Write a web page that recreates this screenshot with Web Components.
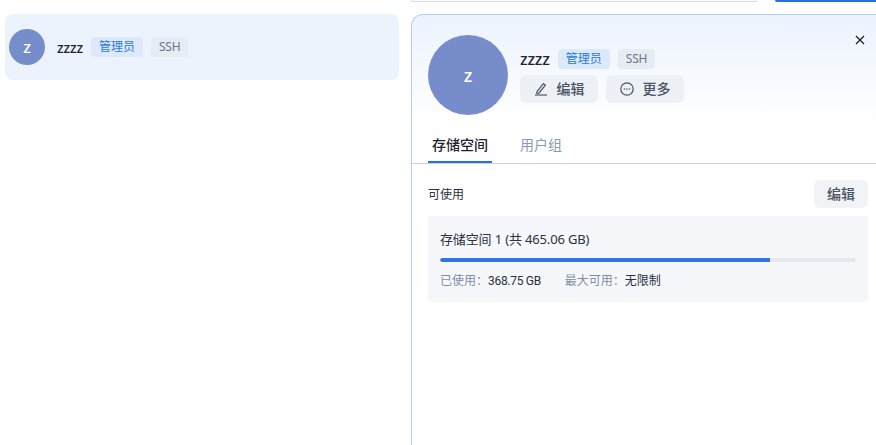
<!DOCTYPE html>
<html lang="zh">
<head>
<meta charset="utf-8">
<title>用户</title>
<style>
html, body { margin: 0; height: 100%; overflow: hidden; background: #fff; }
body { font-family: "Noto Sans", "Noto Sans CJK SC", sans-serif; color: #1f2430; }
</style>
</head>
<body>
<app-shell>
  <user-row slot="list" name="zzzz"></user-row>
  <user-detail slot="detail" name="zzzz"></user-detail>
</app-shell>

<script>
const TAGS = `<user-tag kind="primary">管理员</user-tag><user-tag>SSH</user-tag>`;

class AppShell extends HTMLElement {
  constructor() {
    super();
    this.attachShadow({ mode: "open" }).innerHTML = `<style>
:host { display: flex; height: 445px; box-sizing: border-box; }
.list { width: 394px; flex: none; padding: 14px 12px 0 5px; }
.main { flex: 1; min-width: 0; display: flex; flex-direction: column; }
.top { height: 2px; flex: none; display: flex; gap: 18px; margin-bottom: 12px; }
.search { width: 346px; height: 2px; box-sizing: border-box; border: 1px solid #d5dae2; border-top: 0; border-radius: 0 0 4px 4px; }
.add { flex: 1; background: #2273e0; border-radius: 0 0 0 5px; }
</style>
<div class="list"><slot name="list"></slot></div>
<div class="main">
  <div class="top"><div class="search"></div><div class="add"></div></div>
  <slot name="detail"></slot>
</div>`;
  }
}
customElements.define("app-shell", AppShell);

class UserAvatar extends HTMLElement {
  constructor() {
    super();
    this.attachShadow({ mode: "open" }).innerHTML = `<style>
:host { display: flex; flex: none; align-items: center; justify-content: center; width: var(--size, 36px); height: var(--size, 36px);
  border-radius: 50%; background: #778dcb; color: #fff; font-size: var(--letter, 16px); font-weight: 500; }
</style><slot></slot>`;
  }
}
customElements.define("user-avatar", UserAvatar);

class UserTag extends HTMLElement {
  constructor() {
    super();
    this.attachShadow({ mode: "open" }).innerHTML = `<style>
:host { display: inline-flex; align-items: center; height: 20px; padding: 0 8px; border-radius: 4px;
  background: #e7ecf4; color: #6b7686; font-size: 12px; line-height: 20px; letter-spacing: -.2px; }
:host([kind="primary"]) { background: #dbe9fb; color: #2a78e4; letter-spacing: 0; }
</style><slot></slot>`;
  }
}
customElements.define("user-tag", UserTag);

class ActionButton extends HTMLElement {
  constructor() {
    super();
    this.attachShadow({ mode: "open" }).innerHTML = `<style>
:host { display: inline-flex; align-items: center; justify-content: center; gap: 9px; height: 28px; width: var(--w, 78px); box-sizing: border-box;
  padding-bottom: 2px; border-radius: 6px; background: var(--bg, #edf0f5); color: #4a5365; font-size: 14px; font-weight: 500; }
</style><slot name="icon"></slot><slot></slot>`;
  }
}
customElements.define("action-button", ActionButton);

class UserRow extends HTMLElement {
  constructor() {
    super();
    const name = this.getAttribute("name");
    this.attachShadow({ mode: "open" }).innerHTML = `<style>
:host { display: flex; align-items: center; height: 66px; padding-left: 4px; border-radius: 8px; background: #ecf3fd; }
.name { margin: 0 8px 0 12px; font-size: 14px; font-weight: 500; letter-spacing: -.2px; color: #1f2430; }
user-tag + user-tag { margin-left: 8px; }
</style>
<user-avatar>${name[0]}</user-avatar><span class="name">${name}</span>${TAGS}`;
  }
}
customElements.define("user-row", UserRow);

class UsageBar extends HTMLElement {
  constructor() {
    super();
    const value = this.getAttribute("value");
    this.attachShadow({ mode: "open" }).innerHTML = `<style>
:host { display: block; height: 4px; border-radius: 2px; background: #e6e8ee; overflow: hidden; }
div { height: 100%; width: ${value}%; background: #3176dc; border-radius: 2px 0 0 2px; }
</style><div></div>`;
  }
}
customElements.define("usage-bar", UsageBar);

class StorageCard extends HTMLElement {
  constructor() {
    super();
    this.attachShadow({ mode: "open" }).innerHTML = `<style>
:host { display: block; box-sizing: border-box; height: 86px; padding: 14px 12px 0; border-radius: 4px; background: #f5f7fb; color: #2b3140; }
.title { height: 18px; line-height: 18px; margin-bottom: 10px; font-size: 13px; letter-spacing: -.15px; }
.stats { display: flex; gap: 24px; margin-top: 10px; line-height: 18px; font-size: 12px; font-family: Roboto, "Noto Sans CJK SC", sans-serif; }
.stats i { font-style: normal; color: #7f8da3; }
.stats b { font-weight: 400; letter-spacing: -.3px; }
</style>
<div class="title">存储空间 1 (共 465.06 GB)</div>
<usage-bar value="79.3"></usage-bar>
<div class="stats">
  <span><i>已使用：</i><b>368.75 GB</b></span>
  <span><i>最大可用：</i>无限制</span>
</div>`;
  }
}
customElements.define("storage-card", StorageCard);

class UserDetail extends HTMLElement {
  constructor() {
    super();
    const name = this.getAttribute("name");
    this.attachShadow({ mode: "open" }).innerHTML = `<style>
:host { display: block; flex: 1; position: relative; box-sizing: border-box; border: 1px solid #b3cdf3; border-right: 0; border-bottom: 0;
  border-radius: 12px 0 0 0; background: linear-gradient(#ecf3fd 0, #fff 112px) no-repeat; background-size: 100% 112px; }
.close { position: absolute; top: 20px; right: 11px; display: block; }
.head { display: flex; gap: 12px; padding: 20px 0 0 16px; height: 80px; }
.head user-avatar { --size: 80px; --letter: 18px; }
.info { padding-top: 14px; }
.line { display: flex; align-items: center; height: 20px; margin-bottom: 6px; }
.name { margin-right: 8px; font-size: 16px; font-weight: 500; letter-spacing: -.2px; }
user-tag + user-tag { margin-left: 8px; }
.actions { display: flex; gap: 8px; }
.tabs { display: flex; gap: 28px; margin-top: 14px; padding-left: 16px; height: 34px; border-bottom: 1px solid #ccd3dd; }
.tab { height: 34px; box-sizing: border-box; text-align: center; font-size: 14px; line-height: 31px; color: #8a9bb3; }
.tab.on { width: 64px; border-bottom: 2px solid #2473de; color: #1f2430; font-weight: 500; }
.body { padding: 16px 8px 0 16px; }
.bar { display: flex; align-items: center; justify-content: space-between; height: 28px; margin-bottom: 8px; font-size: 12px; color: #2b3140; }
.bar action-button { --w: 54px; --bg: #f1f3f6; }
action-button svg { position: relative; top: 1px; }
</style>
<svg class="close" width="10" height="10" viewBox="0 0 10 10" fill="none" stroke="#1f2430" stroke-width="1.4"><path d="M1 1l8 8M9 1l-8 8"/></svg>
<div class="head">
  <user-avatar>${name[0]}</user-avatar>
  <div class="info">
    <div class="line"><span class="name">${name}</span>${TAGS}</div>
    <div class="actions">
      <action-button>
        <svg slot="icon" width="14" height="14" viewBox="0 0 14 14" fill="none" stroke="#4a5365" stroke-width="1.2"><path d="M3 9.6L9.4 1.6l2 1.6L5 11l-2.2.5z" stroke-linejoin="round"/><path d="M1 13h12"/></svg>
        编辑
      </action-button>
      <action-button>
        <svg slot="icon" width="14" height="14" viewBox="0 0 14 14" fill="none" stroke="#4a5365" stroke-width="1.2"><circle cx="7" cy="7" r="6.2"/><g fill="#4a5365" stroke="none"><circle cx="4.4" cy="7" r=".8"/><circle cx="7" cy="7" r=".8"/><circle cx="9.6" cy="7" r=".8"/></g></svg>
        更多
      </action-button>
    </div>
  </div>
</div>
<div class="tabs"><div class="tab on">存储空间</div><div class="tab">用户组</div></div>
<div class="body">
  <div class="bar"><span>可使用</span><action-button>编辑</action-button></div>
  <storage-card></storage-card>
</div>`;
  }
}
customElements.define("user-detail", UserDetail);
</script>
</body>
</html>
